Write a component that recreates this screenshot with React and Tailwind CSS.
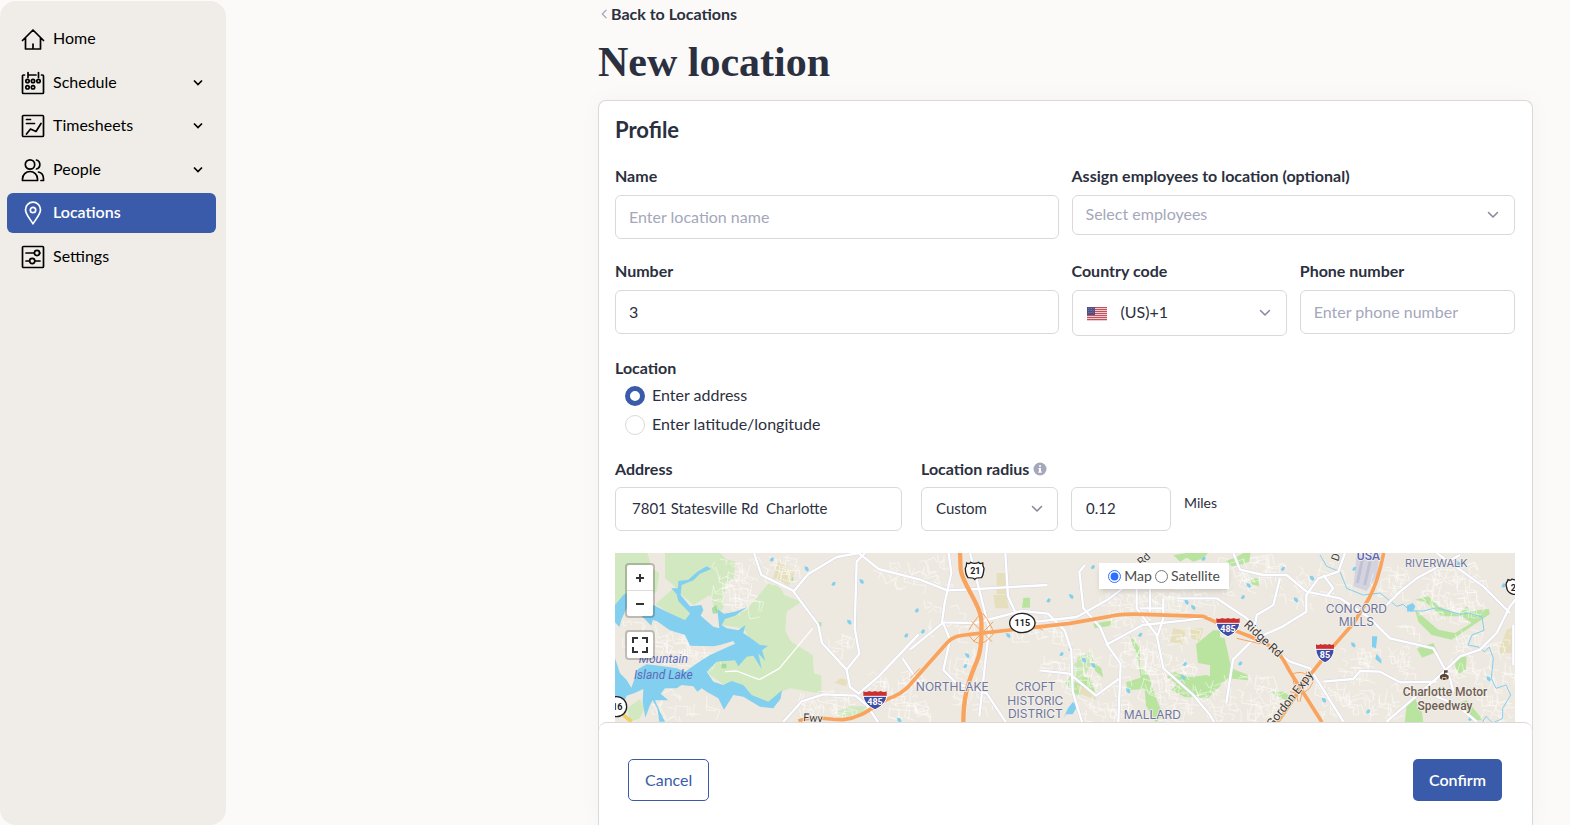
import { useState } from 'react'

const NAV_ITEMS = [
  { id: 'home', label: 'Home', icon: HomeIcon },
  { id: 'schedule', label: 'Schedule', icon: CalendarIcon, expandable: true },
  { id: 'timesheets', label: 'Timesheets', icon: ChartIcon, expandable: true },
  { id: 'people', label: 'People', icon: PeopleIcon, expandable: true },
  { id: 'locations', label: 'Locations', icon: PinIcon },
  { id: 'settings', label: 'Settings', icon: SlidersIcon },
]

const FIELD = 'w-full rounded-md border border-[#dcd8da] bg-white pb-0.5 text-[#2b3040] placeholder-[#a5a7bb] focus:outline-none focus:border-[#3a5ba9]'
const LABEL = 'block text-base leading-6 font-bold text-[#2b3040]'

function Icon({ children }) {
  return (
    <svg viewBox="0 0 24 24" className="h-6 w-6 shrink-0" fill="none" stroke="currentColor" strokeWidth="1.7" strokeLinecap="round" strokeLinejoin="round" aria-hidden="true">
      {children}
    </svg>
  )
}

function HomeIcon() {
  return (
    <Icon>
      <path d="M1.500 13.500 12 3l10.500 10.500M4.500 11v11h15V11M12 22v-5" />
    </Icon>
  )
}

function CalendarIcon() {
  return (
    <Icon>
      <path d="M3.500 4h-1a1 1 0 0 0-1 1v16.500a1 1 0 0 0 1 1h19a1 1 0 0 0 1-1V5a1 1 0 0 0-1-1h-1M7 1.500v5M17.500 1.500v5M7 4h8" />
      <circle cx="6.500" cy="10" r="1.700" />
      <circle cx="12" cy="10" r="1.700" />
      <circle cx="17.500" cy="10" r="1.700" />
      <circle cx="6.500" cy="16.300" r="1.700" />
      <circle cx="12" cy="16.300" r="1.700" />
    </Icon>
  )
}

function ChartIcon() {
  return (
    <Icon>
      <rect x="1.500" y="1.500" width="21" height="21" rx="1" />
      <path d="M5.500 5.500h4M5.500 9.500h8M5.500 20l4-5 5.500 2.500 5-8" />
    </Icon>
  )
}

function PeopleIcon() {
  return (
    <Icon>
      <circle cx="9" cy="6.500" r="4.700" />
      <path d="M1.500 22.500v-1.500a7.500 7.500 0 0 1 15 0v1.500zM15.500 2a4.700 4.700 0 0 1 0 9M17.500 14c3 .7 5 3.500 5 7v1.500H20" />
    </Icon>
  )
}

function PinIcon() {
  return (
    <Icon>
      <path d="M12 22.800C9 18 4.500 13 4.500 8.700a7.500 7.500 0 0 1 15 0C19.500 13 15 18 12 22.800z" />
      <circle cx="12" cy="9" r="2.700" />
    </Icon>
  )
}

function SlidersIcon() {
  return (
    <Icon>
      <rect x="1.500" y="1.500" width="21" height="21" rx="1" />
      <path d="M5 8h8M18.500 8h.500M5 16h3.500M14 16h5" />
      <circle cx="16" cy="8" r="2.600" />
      <circle cx="11.200" cy="16" r="2.600" />
    </Icon>
  )
}

function Chevron({ className }) {
  return (
    <svg viewBox="0 0 12 12" className={className} fill="none" stroke="currentColor" strokeWidth="1.500" strokeLinecap="round" strokeLinejoin="round" aria-hidden="true">
      <path d="M1.500 3.500 6 8l4.500-4.500" />
    </svg>
  )
}

function UsFlag() {
  return (
    <svg viewBox="0 0 20 14" className="h-[14px] w-5" aria-hidden="true">
      <rect width="20" height="14" fill="#f3dde0" />
      {[0, 2, 4, 6, 8, 10, 12].map(y => (
        <rect key={y} y={y} width="20" height="1.100" fill="#c4505b" />
      ))}
      <rect width="8" height="8" fill="#504f86" />
      {[1.5, 3.5, 5.5].map(y => (
        <path key={y} d={`M1 ${y}h6`} stroke="#9b9bc0" strokeWidth=".600" strokeDasharray=".800 .800" />
      ))}
    </svg>
  )
}

function Sidebar() {
  const [active, setActive] = useState('locations')
  return (
    <aside className="mt-px w-[226px] shrink-0 rounded-2xl bg-[#f0ede8]">
      <nav className="flex h-[276px] flex-col justify-between pt-[18px] pr-2.5 pl-[7px]">
        {NAV_ITEMS.map(({ id, label, icon: NavIcon, expandable }) => (
          <button
            key={id}
            onClick={() => setActive(id)}
            className={`flex h-10 items-center gap-2 rounded-md pr-[13px] pl-3.5 text-left text-base ${
              active === id ? 'bg-[#3a5ba9] font-semibold text-white' : 'text-black'
            }`}
          >
            <NavIcon />
            <span className="flex-1 pb-0.5">{label}</span>
            {expandable && (
              <svg viewBox="0 0 10 10" className="h-2.5 w-2.5" fill="none" stroke="currentColor" strokeWidth="1.700" aria-hidden="true">
                <path d="M1 2.500 5 6.500l4-4" />
              </svg>
            )}
          </button>
        ))}
      </nav>
    </aside>
  )
}

// Small deterministic generator, so the residential streets stay put between renders
function makeStreets(clusters) {
  let seed = 7
  const rnd = () => {
    seed = (seed * 16807) % 2147483647
    return seed / 2147483647
  }
  return clusters.map(([x, y, w, h, n]) => {
    let d = ''
    for (let i = 0; i < n; i++) {
      const sx = Math.round(x + rnd() * w)
      const sy = Math.round(y + rnd() * h)
      const a = Math.round(12 + rnd() * 32)
      const b = Math.round(rnd() * 24 - 12)
      d += rnd() > 0.5
        ? `M${sx} ${sy}l${a} ${b}l${-b} ${Math.round(a * 0.7)}`
        : `M${sx} ${sy}l${b} ${a}l${Math.round(a * 0.7)} ${-b}`
    }
    return d
  }).join('')
}

const STREETS = makeStreets([
  [310, 30, 120, 150, 50], [440, 30, 100, 60, 20], [130, 240, 110, 90, 30], [30, 210, 90, 110, 14],
  [180, 300, 120, 50, 16], [560, 440, 160, 70, 36], [770, 380, 160, 140, 50], [120, 440, 200, 80, 20],
  [760, 40, 150, 60, 12], [640, 260, 60, 60, 8], [910, 30, 100, 90, 18], [940, 160, 130, 100, 14],
  [1010, 300, 110, 200, 24], [1190, 200, 170, 70, 22], [1290, 300, 190, 110, 40], [1470, 140, 180, 90, 44],
  [1500, 270, 130, 100, 34], [1400, 400, 130, 120, 34], [1590, 250, 160, 200, 56], [1620, 400, 200, 110, 40],
  [1620, 130, 180, 50, 24], [1820, 30, 170, 90, 40], [1980, 50, 200, 130, 24], [1830, 380, 180, 130, 44],
  [2100, 400, 120, 100, 24], [2290, 60, 90, 80, 22], [2420, 60, 180, 150, 80], [2180, 300, 110, 80, 20],
  [2330, 240, 80, 160, 20], [2510, 250, 190, 130, 40], [2590, 380, 120, 130, 30], [2200, 420, 180, 90, 22],
])

const MAJOR_ROADS = [
  // west
  'M432 24l22 66 94 46 76 102 12 56 74 80 10 52 26 20 60-52 120-126',
  'M550 140l44-52 86-52 66-12 60 48 124 32 82 32 90-4 210-12',
  'M765 24l-25 26-6 200 14 76-38 48',
  'M520 530l54-60 66-22 96 4 34 28 40 60',
  'M878 340l30 46 40 50',
  // centre
  'M1016 24l8 60-20 90-8 58 100 2 140-36 78 8 50 50 20 60 4 124 40 130-20',
  'M1080 24l30 120 28 110-8 60-22 200',
  'M1186 24l8 130 20 44 66 32 120-14 90-50 80-60',
  'M1425 60l-17 20 12 110 50 56 26 60 36 50-8 200',
  'M1288 376l90 10 80 66 68-50',
  'M1488 300l110-60 130-14 70-10',
  'M1580 130v60l60 80 20 100 90 80 50 60 40 70M1590 190h70M1620 130v70M1660 160v60l-20 60',
  'M1000 235l20 50-20 90 40 40 90 30 60 90',
  'M1000 232l-100 82',
  'M1700 160l120 0 90 60 30 30',
  // east
  'M1870 24l20 50 70 16 70 0 60 50 100 20 90 60 60 60 130 30 50 90 10 40',
  'M2205 24l-20 56-60 20-36 50 0 50-70 44-90 40-60 60-20 130',
  'M2010 100l-20 80-50 30-10 60M2140 90l30 40-20 24',
  'M2480 24l140 100 80 80M2550 30l-130 70-50 40-40 40',
  'M1960 290l80 60 60 20 100 160M2140 410l90-8 20-24 60 2 60 32 110-2',
  'M2330 530l150-130 70-66 60-20 50-50 40-80 40-50',
  'M2470 450l70 30 60 50M2710 240v120',
]

const ponds = [
  [485, 42], [590, 72], [670, 115], [755, 110], [920, 195], [718, 232], [888, 270], [868, 526],
  [938, 258], [1072, 332], [1065, 362], [1195, 272], [1315, 165], [1384, 155], [1354, 326],
  [1422, 346], [1380, 310], [1450, 362], [1448, 65], [1750, 188], [1590, 268], [1730, 172], [1380, 490],
  [1555, 438], [1724, 356], [1720, 398], [1780, 40], [1916, 122], [2018, 70], [2106, 100], [1898, 155],
  [2058, 165], [2232, 70], [2230, 300], [1890, 354], [2142, 466],
  [2274, 498], [2636, 402], [2580, 520], [2545, 56], [2680, 120],
]

function Interstate({ x, y, w, children }) {
  const h = w / 2
  return (
    <g transform={`translate(${x} ${y})`}>
      <path d={`M${-h} -17C${-h - 3} 8 -14 24 0 30C14 24 ${h + 3} 8 ${h} -17z`} fill="#3f4da3" stroke="#fff" strokeWidth="3" />
      <path d={`M${-h} -11v-14q8 4 ${h / 2} -1q${h / 4} 4 ${h / 2} 0q${h / 4} 4 ${h / 2} 0q8 5 ${h / 2} 1v14z`} fill="#c9302f" />
      <path d={`M${-h} -10h${w}`} stroke="#fff" strokeWidth="3" />
      <text y="16" textAnchor="middle" fontSize="27" fontWeight="700" fill="#fff">{children}</text>
    </g>
  )
}

function MapDrawing() {
  return (
    <svg viewBox="15 24 2700 510" preserveAspectRatio="xMidYMin slice" className="absolute inset-0 h-full w-full font-[Roboto,sans-serif]" role="img" aria-label="Map of north Charlotte">
      <rect x="0" y="0" width="2730" height="3000" fill="#eee9e0" />

      {/* Parks */}
      <g fill="#d2e8c0">
        <path d="M15 24H112L125 70 148 84 140 140 100 160 60 180 15 190z" />
        <path d="M165 24H330L348 42 376 50 372 100 348 116 340 190 320 208 300 150 250 180 215 150 190 120 165 100z" />
        <path d="M136 178L188 132 210 160 240 200 225 228 190 212z" />
        <path d="M478 112L512 128 522 150 575 170 530 200 526 258 544 290 608 330 612 385 634 392V446L540 430 515 440 510 470 440 480 400 420 350 425 300 390 285 370 330 340 400 330 430 300 400 250 335 240 340 222 410 195z" />
        <path d="M52 490L90 462 104 490 88 522 60 528zM680 500L720 484H770L750 510 690 516z" />
      </g>
      <g fill="#b9e4a0">
        <path d="M1366 415L1386 388 1440 400 1456 440 1400 450zM1450 350l24 20 6 28-24-20zM1240 158h20v30h-24z" />
        <path d="M1558 270l32 36 0 56 26 30 20 60 24 60-22 20-30-50-4-50-50 4-6-24 44-14-10-60z" />
        <path d="M1810 256l20 0 0 110-66-12-6-56zM1690 380l50 16 50-6 40 14v20l-36 36-70-4-40-20 16-20-30-20z" />
        <path d="M1690 30l40-6 64 0-14 16-30 10-20-12-20 12zM1450 236l60-10-6 16-50 8z" />
        <path d="M1800 270l44 10 20 90 50 20 0 16-60-6-30 26-24-10zM1900 24h22l-6 30-50 10-20-16 30-10zM1916 100l30 0 0 24-20-6z" />
        <path d="M2415 170l40-10 30 30 60 26 24-26 14 14 54-6 2 16-54 36-60 40-60-14-40-40-10-36 70 60 50 10 50-30-30-20-60 0-50-44z" transform="translate(0 -6)" />
        <path d="M2420 310l50-16 12 26-46 18zM2540 336l30-4-2 40-20 14-14-20zM2390 480l20-28 26 50 4 32-56 0z" />
        <path d="M1980 440l40 0 30 20-10 12-40-20zM2530 480l40-14 50 60-20 0z" />
      </g>
      <path d="M1380 390L1404 336 1440 322 1452 346 1410 412z" fill="#cbe6b6" />
      <g fill="#6cd06c" opacity=".500">
        <path d="M500 66l16 2 0 20-16-4zM520 86l30 10 0 12-30-8zM305 190l14-10 4 24-14 2zM624 232h10v12h-14zM335 356h14v14h-14z" />
      </g>
      <g fill="#e6dfbd">
        <path d="M505 50l28 16 20 16-16 40-48-24zM690 400l22 4-4 20-34-10zM1160 84h28v64h-28zM1150 150h40l6 40-40 0zM1690 250l40 0-14 50-36-10zM1740 250h40l-12 40-24-10zM1400 420l50 20 10 26-50-20zM2690 254l25-10v80h-50z" />
      </g>
      <path d="M2240 30l70-6-10 70-30 44-40-14z" fill="#d3d4df" />
      <path d="M2258 40l-16 74M2280 50l-16 70" stroke="#bfc2d3" strokeWidth="9" />

      {/* Streets */}
      <path d={STREETS} fill="none" stroke="#fff" strokeWidth="2.5" opacity=".600" />

      {/* Water */}
      <g fill="#82cfef">
        <path d="M15 180L40 150 50 145V190L34 224 28 246 15 232z" />
        <path d="M130 180L170 200 225 226 240 205 205 168 200 148 184 130 204 130 205 108 235 104 262 80 290 64 304 72 270 86 250 106 215 120 212 150 240 184 274 180 280 195 272 212 310 245 328 250 322 192 342 206 375 200 412 186 375 212 345 222 335 240 350 250 385 256 406 240 400 264 430 285 450 300 474 302 456 316 466 348 445 325 455 372 430 332 410 335 385 364 375 346 345 348 320 350 290 380 310 410 340 420 365 408 400 420 425 450 475 470 516 436 512 460 490 490 450 485 400 455 370 450 342 494 325 460 290 440 275 430 262 440 250 424 215 420 200 430 165 430 152 446 175 466 135 466 150 500 165 530 148 530 142 490 128 466 120 480 106 518 98 470 100 432 74 444 50 452 40 478 15 500V340L30 385 50 405 64 428 84 372 110 358 160 364 200 370 225 380 268 350 300 330 375 296 370 288 330 300 310 304 240 302 225 270 180 256 140 228 95 216z" />
        <path d="M96 214l34 4-6 24zM1360 520l14-30 14-18 16 8-16 28-20 0zM2390 182l18-8 8 10-6 14-18 2zM2286 274l16 0-4 36-12-4zM2300 326l14 18 0 12-18-14z" />
        {ponds.map(([x, y], i) => (
          <path key={i} d={i % 2 ? `M${x - 7} ${y - 8}l10 2 4 8-4 6-8-6z` : `M${x - 6} ${y + 4}l6-9 7 2-2 8-6 3z`} />
        ))}
      </g>
      <path d="M2130 30l20 34 40 16 20 50 50 20 50-6 50 40 20-6 20 20 40 0 40-10 70 20 26-4 40 12 6 40-36 14-12 30 30 6 20 14 14-14 12 34-6 60 14 30 30-10 14 30-24 40 0 30-30 14-20-20-24 40" fill="none" stroke="#82cfef" strokeWidth="3" />

      {/* Roads */}
      <g fill="none" strokeLinejoin="round">
        {MAJOR_ROADS.map(d => <path key={d} d={d} stroke="#d5d6e6" strokeWidth="10" />)}
        {MAJOR_ROADS.map(d => <path key={d} d={d} stroke="#fff" strokeWidth="7" />)}
        <path d="M345 380l35-2 68 26 60-34 100-120" stroke="#fff" strokeWidth="4" />
        <path d="M15 490l50 40" stroke="#f2cf62" strokeWidth="11" />
        <g stroke="#f9a45e" strokeWidth="3">
          <path d="M1076 256q30-50 40-50t36 56M1076 270q20 30 40 24t40-36M1090 290l60-60M1086 230l60 60M2040 390q40-20 60 10M2040 440q50 20 70-30M2044 380l20 90M2090 380l-20 90M1880 280l70 16M1900 270l70 30M1240 262l40-30M1250 230l50 26M900 400l30-30" />
        </g>
        <g stroke="#f9a45e">
          <path d="M565 528C620 508 650 526 700 524C770 516 800 470 850 455C890 440 910 405 930 385L1010 295C1030 272 1050 272 1080 268L1200 255L1380 235L1500 214C1530 207 1550 206 1600 208L1780 214C1820 232 1860 252 1920 274L1975 300C2010 320 2020 345 2040 380L2136 532" strokeWidth="11" />
          <path d="M1050 24l2 50c8 50 58 100 62 150c2 60 0 100-20 140c-20 50-34 90-34 170" strokeWidth="13" />
          <path d="M2321 24c-10 50-24 100-44 136l-46 74-70 80-60 75-100 145" strokeWidth="11" />
        </g>
      </g>

      {/* Shields */}
      <Interstate x={795} y={464} w={70}>485</Interstate>
      <Interstate x={1854} y={245} w={70}>485</Interstate>
      <Interstate x={2145} y={323} w={54}>85</Interstate>
      <g fill="#fff" stroke="#222" strokeWidth="4">
        <ellipse cx="1237" cy="234" rx="38" ry="29" />
        <circle cx="20" cy="485" r="30" />
        <path d="M1070 54q8 4 12-2q12 6 24 0q4 6 12 2q0 10 4 16q-2 22-8 28q-16 0-20 5q-4-5-20-5q-8-10-8-28q4-6 4-16z" />
        <path d="M2694 104q8 4 12-2q12 6 24 0v46h-20q-18-4-20-20q-4-14 2-18z" />
      </g>
      <g fill="#222" fontWeight="700" fontSize="27" textAnchor="middle">
        <text x="1237" y="243">115</text>
        <text x="1096" y="86">21</text>
        <text x="22" y="495">16</text>
        <text x="2710" y="138">2</text>
      </g>

      {/* Labels */}
      <g textAnchor="middle" paintOrder="stroke" stroke="#f4f0ea" strokeWidth="5" strokeLinejoin="round">
        <g fill="#6d769f" fontSize="36" fontFamily="Inter, sans-serif">
          <text x="1027" y="439">NORTHLAKE</text>
          <text x="1276" y="439">CROFT</text>
          <text x="1276" y="479">HISTORIC</text>
          <text x="1276" y="519">DISTRICT</text>
          <text x="1627" y="522">MALLARD</text>
          <text x="2239" y="204">CONCORD</text>
          <text x="2239" y="244">MILLS</text>
          <text x="2479" y="67" fontSize="33">RIVERWALK</text>
        </g>
        <text x="2275" y="45" fill="#5c66b5" fontSize="36" fontWeight="500">USA</text>
        <g fill="#6f5f55" fontSize="36" fontWeight="500">
          <text x="2505" y="452">Charlotte Motor</text>
          <text x="2505" y="495">Speedway</text>
        </g>
        <g fill="#3c3c3c" fontSize="33">
          <text x="608" y="530" transform="rotate(4 608 530)">Fwy</text>
          <text x="1609" y="50" transform="rotate(-42 1609 50)">Rd</text>
          <text x="2188" y="40" transform="rotate(-70 2188 40)">D</text>
          <text x="1952" y="290" fontSize="36" transform="rotate(43 1952 290)">Ridge Rd</text>
          <text x="2049" y="470" fontSize="36" transform="rotate(-52 2049 470)">Gordon Expy</text>
        </g>
      </g>
      <g textAnchor="middle" fill="#5a6cb8" fontSize="36" fontStyle="italic">
        <text x="160" y="354">Mountain</text>
        <text x="160" y="402">Island Lake</text>
      </g>
      <g transform="translate(2503 390)" fill="#5b4636">
        <path d="M-1-4V-14H10V-7H2V-4z" />
        <path d="M-13 2Q0-10 13 2V10Q10 14 6 14V6H-6V14Q-10 14-13 10z" />
        <path d="M-4 8H4V15H-4z" />
      </g>
    </svg>
  )
}

function LocationMap() {
  const [mapType, setMapType] = useState('map')
  return (
    <div className="relative mt-[22px] min-h-[160px] flex-1 overflow-hidden">
      <MapDrawing />
      <div className="absolute top-2.5 left-2.5 flex flex-col gap-3">
        <div className="flex w-[30px] flex-col rounded-sm border-2 border-black/20 bg-white bg-clip-padding text-[#333]">
          <button aria-label="Zoom in" className="flex h-[26px] items-center justify-center border-b border-[#ddd]">
            <svg viewBox="0 0 10 10" className="h-2.5 w-2.5" stroke="currentColor" strokeWidth="2"><path d="M1 5h8M5 1v8" /></svg>
          </button>
          <button aria-label="Zoom out" className="flex h-[25px] items-center justify-center">
            <svg viewBox="0 0 10 10" className="h-2.5 w-2.5" stroke="currentColor" strokeWidth="2"><path d="M1 5h8" /></svg>
          </button>
        </div>
        <button aria-label="Full screen" className="flex h-[30px] w-[30px] items-center justify-center rounded-sm border-2 border-black/20 bg-white bg-clip-padding text-[#333]">
          <svg viewBox="0 0 16 16" className="h-4 w-4" fill="none" stroke="currentColor" strokeWidth="2">
            <path d="M6 1H1v5M10 1h5v5M6 15H1v-5M10 15h5v-5" />
          </svg>
        </button>
      </div>
      <div className="absolute top-2.5 right-[286px] flex h-[26px] items-center gap-[3px] bg-white px-[9px] text-sm text-[#4c4c4c] shadow-md">
        <label className="flex items-center gap-[3px]">
          <input type="radio" name="map-type" className="h-[13px] w-[13px] accent-[#2f6fff]" checked={mapType === 'map'} onChange={() => setMapType('map')} />
          Map
        </label>
        <label className="flex items-center gap-[3px]">
          <input type="radio" name="map-type" className="h-[13px] w-[13px]" checked={mapType === 'satellite'} onChange={() => setMapType('satellite')} />
          Satellite
        </label>
      </div>
    </div>
  )
}

function RadioOption({ value, current, onChange, children }) {
  return (
    <label className="flex h-6 items-center gap-[7px] pl-2.5">
      <input
        type="radio"
        name="location-mode"
        checked={current === value}
        onChange={() => onChange(value)}
        className="h-5 w-5 appearance-none rounded-full border border-[#dcd8da] bg-white checked:border-[5px] checked:border-[#3a5ba9]"
      />
      <span className="pb-0.5">{children}</span>
    </label>
  )
}

export default function App() {
  const [name, setName] = useState('')
  const [number, setNumber] = useState('3')
  const [phone, setPhone] = useState('')
  const [mode, setMode] = useState('address')
  const [address, setAddress] = useState('7801 Statesville Rd  Charlotte')
  const [radius, setRadius] = useState('0.12')

  return (
    <div className="flex h-screen bg-[#fbfaf8] font-[Lato,'Open_Sans',sans-serif] text-base text-[#2b3040]">
      <Sidebar />

      <main className="mr-[37px] ml-[372px] flex min-w-0 flex-1 flex-col">
        <a href="#locations" className="flex items-center gap-0.5 self-start pt-0.5 pl-px font-bold">
          <Chevron className="h-2.5 w-2.5 rotate-90 text-[#a5a7bb]" />
          Back to Locations
        </a>
        <h1 className="mt-3 mb-3.5 font-['Liberation_Serif',serif] text-[42px] leading-12 font-bold">New location</h1>

        <form className="flex min-h-0 flex-1 flex-col rounded-t-lg border border-b-0 border-[#dcd8da] bg-white shadow-[0_0_24px_rgba(0,0,0,0.03)]" onSubmit={e => e.preventDefault()}>
          <div className="flex min-h-0 flex-1 flex-col overflow-hidden pr-[17px] pl-4">
            <h2 className="mt-[15px] mb-5 text-[22px] leading-7 font-bold">Profile</h2>

            <div className="grid grid-cols-2 gap-[13px] gap-y-5">
              <div>
                <label htmlFor="name" className={LABEL}>Name</label>
                <input id="name" className={`${FIELD} mt-[7px] h-11 px-[13px]`} placeholder="Enter location name" value={name} onChange={e => setName(e.target.value)} />
              </div>
              <div>
                <label htmlFor="employees" className={LABEL}>Assign employees to location (optional)</label>
                <div className="relative mt-[7px]">
                  <select id="employees" defaultValue="" className={`${FIELD} h-10 appearance-none px-[13px] text-[#a5a7bb]`}>
                    <option value="">Select employees</option>
                  </select>
                  <Chevron className="pointer-events-none absolute top-3.5 right-4 h-3 w-3 text-[#85879c]" />
                </div>
              </div>
              <div>
                <label htmlFor="number" className={LABEL}>Number</label>
                <input id="number" className={`${FIELD} mt-[7px] h-11 px-[13px]`} value={number} onChange={e => setNumber(e.target.value)} />
              </div>
              <div className="grid grid-cols-2 gap-[13px]">
                <div>
                  <label htmlFor="country" className={LABEL}>Country code</label>
                  <div className="relative mt-[7px]">
                    <select id="country" className={`${FIELD} h-[46px] appearance-none pl-12`}>
                      <option>(US)+1</option>
                    </select>
                    <span className="pointer-events-none absolute top-[17px] left-[15px]"><UsFlag /></span>
                    <Chevron className="pointer-events-none absolute top-[17px] right-4 h-3 w-3 text-[#85879c]" />
                  </div>
                </div>
                <div>
                  <label htmlFor="phone" className={LABEL}>Phone number</label>
                  <input id="phone" type="tel" className={`${FIELD} mt-[7px] h-11 px-[13px]`} placeholder="Enter phone number" value={phone} onChange={e => setPhone(e.target.value)} />
                </div>
              </div>
            </div>

            <fieldset className="mt-5">
              <legend className={LABEL}>Location</legend>
              <div className="mt-1 flex flex-col gap-[5px]">
                <RadioOption value="address" current={mode} onChange={setMode}>Enter address</RadioOption>
                <RadioOption value="coords" current={mode} onChange={setMode}>Enter latitude/longitude</RadioOption>
              </div>
            </fieldset>

            <div className="mt-5 flex">
              <div className="w-[287px]">
                <label htmlFor="address" className={LABEL}>Address</label>
                <input id="address" className={`${FIELD} mt-1.5 h-11 px-4 text-[15px]`} value={address} onChange={e => setAddress(e.target.value)} />
              </div>
              <div className="ml-[19px]">
                <div className="flex items-center gap-1">
                  <label htmlFor="radius-type" className={LABEL}>Location radius</label>
                  <svg viewBox="0 0 14 14" className="h-3.5 w-3.5" aria-label="Info">
                    <circle cx="7" cy="7" r="6.500" fill="#a5a7bb" />
                    <path d="M6 3.200h2v1.500H6zM5.500 6h2.500v3.500h.700v1.300H5.300V9.500H6V7.300h-.5z" fill="#fff" />
                  </svg>
                </div>
                <div className="mt-1.5 flex gap-[13px]">
                  <div className="relative w-[137px]">
                    <select id="radius-type" className={`${FIELD} h-11 appearance-none px-3.5 text-[15px]`}>
                      <option>Custom</option>
                    </select>
                    <Chevron className="pointer-events-none absolute top-4 right-[15px] h-3 w-3 text-[#85879c]" />
                  </div>
                  <div className="w-[100px]">
                    <input id="radius" aria-label="Radius in miles" className={`${FIELD} h-11 px-3.5 text-[15px]`} value={radius} onChange={e => setRadius(e.target.value)} />
                  </div>
                  <span className="pt-1.5 text-sm">Miles</span>
                </div>
              </div>
            </div>

            <LocationMap />
          </div>

          <div className="flex h-[103px] shrink-0 items-start justify-between rounded-t-lg border-t border-[#dcd8da] bg-white pt-9 pr-[30px] pl-[29px]">
            <button type="button" className="h-[42px] rounded-[5px] border border-[#3a5ba9] px-4 text-[#3a5ba9]">Cancel</button>
            <button type="submit" className="h-[42px] rounded-[5px] bg-[#3a5ba9] px-4 font-semibold text-white">Confirm</button>
          </div>
        </form>
      </main>
    </div>
  )
}
